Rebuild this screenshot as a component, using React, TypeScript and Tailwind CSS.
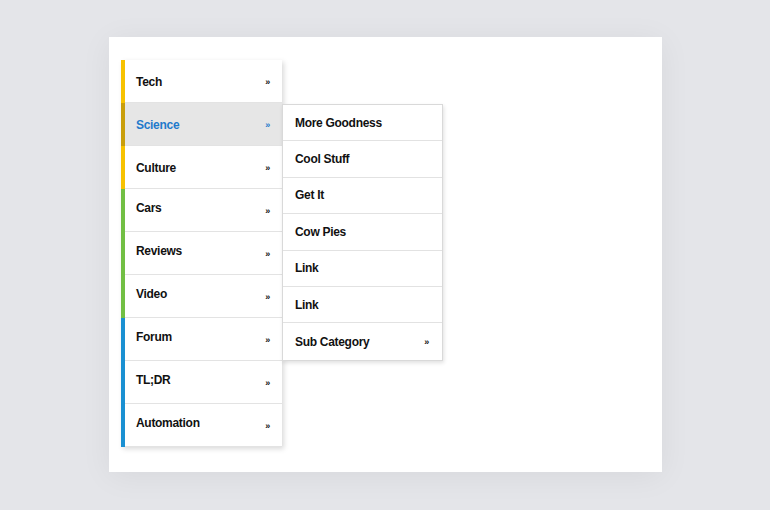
const items = [
  { name: "Tech", color: "border-[#f7c200]", active: false, shift: false },
  { name: "Science", color: "border-[#c99e0a]", active: true, shift: false },
  { name: "Culture", color: "border-[#f7c200]", active: false, shift: false },
  { name: "Cars", color: "border-[#72bf44]", active: false, shift: true },
  { name: "Reviews", color: "border-[#72bf44]", active: false, shift: true },
  { name: "Video", color: "border-[#72bf44]", active: false, shift: true },
  { name: "Forum", color: "border-[#1a90d2]", active: false, shift: true },
  { name: "TL;DR", color: "border-[#1a90d2]", active: false, shift: true },
  { name: "Automation", color: "border-[#1a90d2]", active: false, shift: true },
];

const subItems = ["More Goodness", "Cool Stuff", "Get It", "Cow Pies", "Link", "Link", "Sub Category"];

const Submenu = () => {
  return (
    <ul className="absolute left-full top-px w-[161px] bg-white border border-[#d9d9d9] shadow-[1px_2px_4px_rgba(0,0,0,0.12)] z-10">
      {subItems.map((s, i) => (
        <li
          key={i}
          className="h-[36.4px] flex items-center justify-between pl-[12px] pr-[13px] border-b border-[#e2e2e2] last:border-b-0 text-[12px] tracking-[-0.3px] font-bold text-[#111]"
        >
          <span>{s}</span>
          {s === "Sub Category" && <span className="text-[9px] pt-[2px]">»</span>}
        </li>
      ))}
    </ul>
  );
};

export default function App() {
  return (
    <div
      className="w-[770px] h-[510px] bg-[#e4e5e9] pt-[37px] pl-[109px]"
      style={{ fontFamily: '"Liberation Sans", Arial, sans-serif' }}
    >
      <div className="w-[553px] h-[435px] bg-white shadow-[0_4px_30px_rgba(0,0,0,0.06)] pt-[23px] pl-[12px]">
        <ul className="w-[161px] shadow-[2px_2px_5px_rgba(0,0,0,0.15)]">
          {items.map((it, i) => (
            <li
              key={i}
              className={`relative h-[43px] border-l-4 ${it.color} ${it.active ? "bg-[#e6e6e6] text-[#1f7acb]" : "bg-white text-[#111]"}`}
            >
              <div className="h-full flex items-center justify-between pl-[11px] pr-[12px] pt-[2px] border-b border-[#e3e3e3] text-[12px] tracking-[-0.3px] font-bold">
                <span className={it.shift ? "pb-[7px]" : ""}>{it.name}</span>
                <span className="text-[9px] pt-[2px]">»</span>
              </div>
              {it.active && <Submenu />}
            </li>
          ))}
        </ul>
      </div>
    </div>
  );
}
